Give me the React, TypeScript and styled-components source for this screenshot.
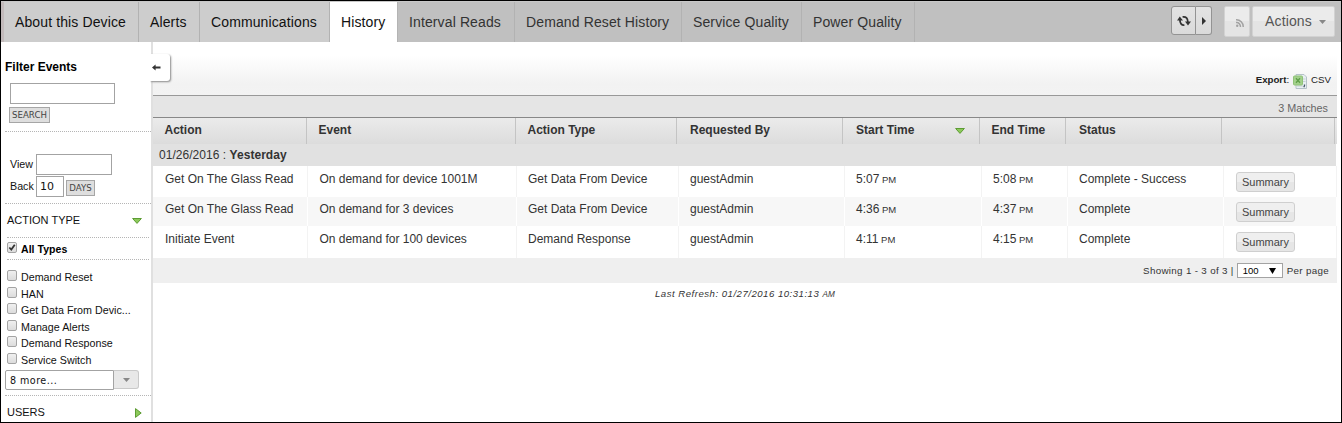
import React from 'react';
import styled, { createGlobalStyle } from 'styled-components';

const Global = createGlobalStyle`
  *, *::before, *::after { box-sizing: border-box; }
  body { margin: 0; background: #fff; font-family: "Liberation Sans", Arial, sans-serif; color: #333; }
`;

const Page = styled.div`
  width: 1342px; height: 423px; border: 1px solid #000; background: #fff;
  display: flex; flex-direction: column; overflow: hidden;
`;
const TopBar = styled.header`
  display: flex; height: 41px; flex: none; background: #c0c0c0; border-top: 1px solid #c8c8c8;
  justify-content: space-between;
`;
const Tabs = styled.nav`
  display: flex; border-left: 3px solid #c2babb;
`;
const Tab = styled.a<{ $w: number; $kind?: 'light' | 'active' }>`
  width: ${p => p.$w}px; height: 40px; line-height: 41px; padding-left: 11px; white-space: nowrap;
  font-size: 14px; letter-spacing: .12px;
  color: ${p => (p.$kind ? '#111' : '#333')};
  background: ${p => (p.$kind === 'active' ? '#fff' : p.$kind === 'light' ? '#cdcdcd' : '#c0c0c0')};
  border-right: 1px solid ${p => (p.$kind === 'active' ? '#b4b4b4' : '#b2b2b2')};
`;
const Tools = styled.div`display: flex; padding: 4px 6px 0 0; align-items: flex-start;`;
const ToolButton = styled.button<{ $w: number; $h?: number; $side?: 'l' | 'r'; $soft?: boolean }>`
  width: ${p => p.$w}px; height: ${p => p.$h ?? 29}px; padding: 0; display: flex; align-items: center; justify-content: center;
  border: 1px solid ${p => (p.$soft ? '#d2d2d2' : '#939393')};
  background: ${p => (p.$soft ? 'linear-gradient(#ebebeb 50%, #e4e4e4 50%)' : 'linear-gradient(#e3e3e3, #dadada)')};
  border-radius: ${p => (p.$side === 'l' ? '3px 0 0 3px' : p.$side === 'r' ? '0 3px 3px 0' : '2px')};
  ${p => p.$side === 'r' && 'border-left: 0;'}
`;
const FeedButton = styled(ToolButton)`padding-left: 5px; padding-top: 2px;`;
const ActionsButton = styled(ToolButton)`
  font: 14px "Liberation Sans", Arial, sans-serif; letter-spacing: .15px; color: #555;
  justify-content: space-between; padding: 0 8px 2px 12px; svg { margin-top: 3px; }
`;
const Gap = styled.span<{ $w: number }>`width: ${p => p.$w}px;`;

const Body = styled.div`display: flex; flex: 1; min-height: 0;`;
const Sidebar = styled.aside`
  position: relative; width: 152px; border-right: 2px solid #e0e0e0; padding-left: 4px; font-size: 11px; color: #111;
`;
const Collapse = styled.button`
  position: absolute; left: 149px; top: 12px; width: 20px; height: 27px; padding: 0 0 0 2px; border: 0;
  background: #fff; border-radius: 0 3px 3px 0; box-shadow: 1px 1px 2px #8a8a8a; z-index: 1; display: flex; align-items: center;
  clip-path: inset(-3px -4px -4px 0);
`;
const Title = styled.h2`margin: 0; padding-top: 17px; height: 41px; font-size: 12px; line-height: 16px; color: #000;`;
const Field = styled.input<{ $w: number }>`
  width: ${p => p.$w}px; height: 21px; border: 1px solid #a3a3a3; background: #fff; padding: 0 3px; display: block;
  font: 11px "DejaVu Sans", sans-serif; color: #111; outline: 0;
`;
const SmallButton = styled.button<{ $w: number }>`
  width: ${p => p.$w}px; height: 16px; padding: 0; border: 1px solid #a6a6a6; background: #dedede; color: #444;
  font: 8.6px/14px "DejaVu Sans", sans-serif; white-space: nowrap;
`;
const SearchBox = styled.section`
  height: 49px; padding: 0 0 0 5px; border-bottom: 1px dotted #b5b5b5;
  ${SmallButton} { display: block; margin: 3px 0 0 -1px; }
`;
const ViewBox = styled.section`height: 72px; padding: 22px 0 0 5px; border-bottom: 1px dotted #b5b5b5;`;
const ViewRow = styled.div`
  display: flex; height: 22px; align-items: flex-start; line-height: 20px; font-size: 10.7px;
  ${SmallButton} { margin: 4px 0 0 2px; }
`;
const ViewLabel = styled.label`width: 26px;`;
const SectionHead = styled.div<{ $h: number; $line?: number; $arrow?: number }>`
  height: ${p => p.$h}px; display: flex; justify-content: space-between; padding: 0 9px 0 2px;
  line-height: ${p => p.$line ?? 32}px; font-size: 11px; svg { margin-top: ${p => p.$arrow ?? 14}px; }
`;
const Check = styled.span`
  width: 10px; height: 11px; border: 1px solid #a4a4a4; border-radius: 2px; background: linear-gradient(#f0f0f0, #dcdcdc);
  margin-right: 4px; flex: none; display: flex;
`;
const AllTypes = styled.div`
  margin: 0 2px; height: 23px; border: dotted #b5b5b5; border-width: 1px 0; display: flex; padding-top: 4px;
  font-size: 10.5px; font-weight: bold; letter-spacing: .05px; line-height: 15px; color: #000;
`;
const TypeList = styled.ul`margin: 0; padding: 9px 0 0 2px; list-style: none; height: 110px;`;
const TypeItem = styled.li`
  display: flex; height: 16.6px; line-height: 17px; font-size: 10.7px; letter-spacing: .02px; ${Check} { margin-top: 1px; }
`;
const More = styled.div`display: flex; margin: 0 0 5px;`;
const MoreText = styled.div`
  width: 109px; height: 20px; border: 1px solid #a3a3a3; border-radius: 2px 0 0 2px; padding-left: 4px; font: 9.6px/19px "DejaVu Sans", sans-serif; letter-spacing: .45px;
`;
const MoreArrow = styled.div`
  width: 25px; height: 19px; border: 1px solid #c9c9c9; border-left: 0; border-radius: 0 3px 3px 0; background: #e8e8e8;
  display: flex; align-items: center; justify-content: center;
`;
const Divider = styled.div`border-top: 1px dotted #b5b5b5; height: 1px;`;

const Main = styled.main`width: 1184px; display: flex; flex-direction: column;`;
const ExportBar = styled.div`
  height: 54px; padding: 27px 6px 0 0; background: linear-gradient(#fff 25%, #f2f2f2 80%, #f3f3f3); border-bottom: 1px solid #999;
  display: flex; justify-content: flex-end; font-size: 9.7px; line-height: 22px; color: #222; svg { margin: 5px 4px 0 4px; }
`;
const Matches = styled.div`height: 21px; background: #e5e5e5; text-align: right; padding-right: 9px; font-size: 10.8px; line-height: 24px; color: #666;`;
const HeadRow = styled.div`
  display: grid; grid-template-columns: 154px 209px 161px 166px 137px 86px 156px 113px 1fr; height: 27px; width: 1184px;
  border-top: 1px solid #888; background: linear-gradient(#ebebeb, #dcdcdc);
`;
const HeadCell = styled.div<{ $pad: number }>`
  border-right: 1px solid #c4c4c4; padding-left: ${p => p.$pad}px; font-size: 12px; font-weight: bold; line-height: 24px;
  display: flex; justify-content: space-between; padding-right: 14px; svg { margin-top: 10px; }
`;
const GroupRow = styled.div`height: 22px; background: #e1e1e1; padding-left: 6px; font-size: 12px; letter-spacing: .04px; line-height: 23px; width: 1183px;`;
const Row = styled.div<{ $alt?: boolean; $h: number }>`
  display: grid; grid-template-columns: 155px 209px 162px 166px 137px 86px 156px 113px; height: ${p => p.$h}px; width: 1184px;
  background: ${p => (p.$alt ? '#f7f7f7' : '#fff')};
`;
const Cell = styled.div<{ $alt?: boolean; $top: number; $pad: number }>`
  border-right: 1px solid ${p => (p.$alt ? '#fff' : '#f3f3f3')}; padding: ${p => p.$top}px 0 0 ${p => p.$pad}px;
  font-size: 12px; line-height: 14px; white-space: nowrap;
  small { font-size: 9.5px; }
`;
const Summary = styled.button`
  width: 59px; height: 20px; display: block; padding: 0; border: 1px solid #cfcfcf; border-radius: 3px;
  background: linear-gradient(#efefef 50%, #e6e6e6 50%); color: #444; font: 11px/18px "Liberation Sans", Arial, sans-serif;
`;
const Pager = styled.div`
  height: 25px; background: #efefef; display: flex; justify-content: flex-end; padding-right: 8px; align-items: center;
  font-size: 9.8px; letter-spacing: .32px;
`;
const PageSelect = styled.span`
  width: 46px; height: 15px; margin: 0 4px 0 3px; border: 1px solid #a3a3a3; background: #fff; color: #000; letter-spacing: 0;
  display: flex; justify-content: space-between; align-items: center; padding: 0 6px 0 5px; font-size: 9.5px;
`;
const Refresh = styled.div`padding: 5px 0 0 502px; font-size: 9.6px; line-height: 12px; font-style: italic; letter-spacing: .5px; small { font-size: 8.2px; letter-spacing: .2px; }`;

const GreenDown = () => (
  <svg width="10" height="6" viewBox="0 0 10 6"><path d="M.6 .5H9.4L5 5.4Z" fill="#8cc95a" stroke="#5d9c34" /></svg>
);
const GreenRight = () => (
  <svg width="7" height="10" viewBox="0 0 7 10"><path d="M.5 .6V9.4L6.2 5Z" fill="#8cc95a" stroke="#5d9c34" /></svg>
);
const GrayDown = () => <svg width="7" height="4" viewBox="0 0 7 4"><path d="M0 0H7L3.5 4Z" fill="#888" /></svg>;
const SyncIcon = () => (
  <svg width="14" height="12" viewBox="0 0 14 12" fill="none" stroke="#333" strokeWidth="1.8">
    <path d="M7.4 10.1C4.6 10.4 2.9 8.6 2.9 4.4" /><path d="M5.6 1.9C9 1.4 10.9 3.2 10.9 7.4" />
    <path d="M0 5.6L2.8 1.6L6 5.6Z M8 6.4L11 10.4L14 6.4Z" fill="#333" stroke="none" />
  </svg>
);
const RssIcon = () => (
  <svg width="8" height="8" viewBox="0 0 8 8" fill="none" stroke="#a2a2a2" strokeWidth="1.5">
    <circle cx="1.2" cy="6.8" r="1.2" fill="#a2a2a2" stroke="none" /><path d="M0 3.6A3.7 3.7 0 0 1 4.3 8M0 .8A6.8 6.8 0 0 1 7.2 8" />
  </svg>
);
const SheetIcon = () => (
  <svg width="14" height="16" viewBox="0 0 14 16">
    <path d="M3 .5H11L13.5 3V14.5H3Z" fill="#e8eff2" stroke="#b5c2c8" /><path d="M8.5 5h4M8.5 7.5h4M4 12h6" stroke="#c6d2d6" />
    <rect x=".5" y="2" width="9" height="9" rx="1" fill="#a3d18c" stroke="#8fc277" />
    <path d="M3 4.2L7 8.8M7 4.2L3 8.8" stroke="#5f9e48" strokeWidth="1.3" /><path d="M11.5 10.5v1.2l-.7 1.5" stroke="#456" fill="none" strokeWidth="1.3" />
  </svg>
);

const types = ['Demand Reset', 'HAN', 'Get Data From Devic...', 'Manage Alerts', 'Demand Response', 'Service Switch'];
const heads = [
  { t: 'Action', pad: 11.5 }, { t: 'Event', pad: 11.5 }, { t: 'Action Type', pad: 11.5 }, { t: 'Requested By', pad: 13 },
  { t: 'Start Time', pad: 13 }, { t: 'End Time', pad: 11.5 }, { t: 'Status', pad: 13 }, { t: '', pad: 12 },
];
const cellPads = [12, 11.4, 11, 11, 11, 11, 11];
const rows = [
  { h: 31, top: 6, c: ['Get On The Glass Read', 'On demand for device 1001M', 'Get Data From Device', 'guestAdmin', '5:07', '5:08', 'Complete - Success'] },
  { h: 29, top: 5, c: ['Get On The Glass Read', 'On demand for 3 devices', 'Get Data From Device', 'guestAdmin', '4:36', '4:37', 'Complete'] },
  { h: 32, top: 6, c: ['Initiate Event', 'On demand for 100 devices', 'Demand Response', 'guestAdmin', '4:11', '4:15', 'Complete'] },
];

export default function App() {
  return (
    <Page>
      <Global />
      <TopBar>
        <Tabs>
          <Tab $w={135} $kind="light">About this Device</Tab>
          <Tab $w={61} $kind="light">Alerts</Tab>
          <Tab $w={130} $kind="light">Communications</Tab>
          <Tab $w={68} $kind="active">History</Tab>
          <Tab $w={117}>Interval Reads</Tab>
          <Tab $w={167}>Demand Reset History</Tab>
          <Tab $w={120}>Service Quality</Tab>
          <Tab $w={113}>Power Quality</Tab>
        </Tabs>
        <Tools>
          <ToolButton $w={25} $side="l"><SyncIcon /></ToolButton>
          <ToolButton $w={16} $side="r"><svg width="4" height="8"><path d="M0 0L4 4L0 8Z" fill="#333" /></svg></ToolButton>
          <Gap $w={12} />
          <FeedButton $w={26} $h={31} $soft><RssIcon /></FeedButton>
          <Gap $w={2} />
          <ActionsButton $w={83} $h={31} $soft>Actions<GrayDown /></ActionsButton>
        </Tools>
      </TopBar>
      <Body>
        <Sidebar>
          <Collapse><svg width="9" height="7" viewBox="0 0 9 7"><path d="M0 3.5L3.6 .4V2.5H8.5V4.5H3.6V6.6Z" fill="#333" /></svg></Collapse>
          <Title>Filter Events</Title>
          <SearchBox>
            <Field $w={105} />
            <SmallButton $w={41}>SEARCH</SmallButton>
          </SearchBox>
          <ViewBox>
            <ViewRow><ViewLabel>View</ViewLabel><Field $w={76} /></ViewRow>
            <ViewRow><ViewLabel>Back</ViewLabel><Field $w={28} defaultValue="10" /><SmallButton $w={29}>DAYS</SmallButton></ViewRow>
          </ViewBox>
          <SectionHead $h={33}>ACTION TYPE<GreenDown /></SectionHead>
          <AllTypes>
            <Check><svg width="8" height="9" viewBox="0 0 9 9"><path d="M1.5 4.5L3.7 6.8L7.6 1.3" fill="none" stroke="#333" strokeWidth="2" /></svg></Check>All Types
          </AllTypes>
          <TypeList>{types.map(t => <TypeItem key={t}><Check />{t}</TypeItem>)}</TypeList>
          <More><MoreText>8 more...</MoreText><MoreArrow><GrayDown /></MoreArrow></More>
          <Divider />
          <SectionHead $h={26} $line={33} $arrow={12}>USERS<GreenRight /></SectionHead>
        </Sidebar>
        <Main>
          <ExportBar><b>Export</b>:<SheetIcon />CSV</ExportBar>
          <Matches>3 Matches</Matches>
          <HeadRow>{heads.map(h => <HeadCell key={h.t} $pad={h.pad}>{h.t}{h.t === 'Start Time' && <GreenDown />}</HeadCell>)}</HeadRow>
          <GroupRow>01/26/2016 : <b>Yesterday</b></GroupRow>
          {rows.map((r, n) => (
            <Row key={n} $h={r.h} $alt={n === 1}>
              {r.c.map((c, i) => <Cell key={i} $alt={n === 1} $top={r.top} $pad={cellPads[i]}>{c}{(i === 4 || i === 5) && <small> PM</small>}</Cell>)}
              <Cell $alt={n === 1} $top={r.top} $pad={12}><Summary>Summary</Summary></Cell>
            </Row>
          ))}
          <Pager>Showing 1 - 3 of 3 |<PageSelect>100<svg width="7" height="6"><path d="M0 0H7L3.5 6Z" /></svg></PageSelect>Per page</Pager>
          <Refresh>Last Refresh: 01/27/2016 10:31:13 <small>AM</small></Refresh>
        </Main>
      </Body>
    </Page>
  );
}
